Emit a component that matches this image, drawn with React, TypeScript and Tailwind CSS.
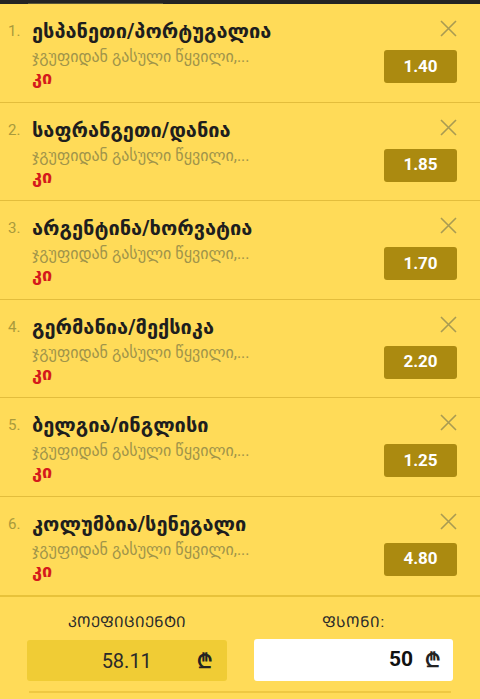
import React from "react";

const items = [
  { n: 1, title: "ესპანეთი/პორტუგალია", odd: "1.40" },
  { n: 2, title: "საფრანგეთი/დანია", odd: "1.85" },
  { n: 3, title: "არგენტინა/ხორვატია", odd: "1.70" },
  { n: 4, title: "გერმანია/მექსიკა", odd: "2.20" },
  { n: 5, title: "ბელგია/ინგლისი", odd: "1.25" },
  { n: 6, title: "კოლუმბია/სენეგალი", odd: "4.80" },
];

const font = { fontFamily: "Roboto, 'DejaVu Sans', sans-serif" };

function XIcon() {
  return (
    <svg width="17" height="17" viewBox="0 0 17 17" fill="none">
      <path d="M1 1L16 16M16 1L1 16" stroke="#a99b52" strokeWidth="1.6" />
    </svg>
  );
}

export default function App() {
  return (
    <div className="w-[480px] h-[699px] overflow-hidden bg-[#ffdb58] flex flex-col" style={font}>
      <div className="h-[4px] bg-[#242424] flex items-end shrink-0">
        <div className="ml-[28px] w-[135px] h-[1px] bg-[#5a5638]" />
      </div>
      {items.map((it, i) => (
        <div
          key={it.n}
          className={`h-[98.5px] shrink-0 flex ${i < 5 ? "border-b border-[#e3bd3c]" : ""}`}
        >
          <div className="w-[32px] pl-[8px] pt-[15px] text-[15px] leading-[24px] text-[#a99a3c]">{it.n}.</div>
          <div className="flex-1 flex flex-col pt-[14px] whitespace-nowrap">
            <div className="text-[20px] font-bold leading-[26px] text-[#1e1e1e]">{it.title}</div>
            <div className="text-[16px] leading-[20px] mt-[3px] text-[#a0944a]">ჯგუფიდან გასული წყვილი,...</div>
            <div className="text-[18px] font-bold leading-[20px] mt-[1px] text-[#d41a1c]">კი</div>
          </div>
          <div className="w-[96px] flex flex-col items-end pr-[23px] pt-[16px]">
            <div className="h-[17px] w-[17px]">
              <XIcon />
            </div>
            <div className="mt-[13px] w-[73px] h-[33px] rounded-[3px] bg-[#ab8a10] text-white font-bold text-[17px] flex items-center justify-center" style={{ fontFamily: "Roboto, sans-serif" }}>
              {it.odd}
            </div>
          </div>
        </div>
      ))}
      <div className="border-t-2 border-[#e8c23a] flex-1 flex flex-col">
        <div className="flex gap-[27px] px-[27px] pt-[15px]">
          <div className="flex-1 flex flex-col items-center">
            <div className="text-[15px] leading-[20px] text-[#2a2a2a]">ᲙᲝᲔᲤᲘᲪᲘᲔᲜᲢᲘ</div>
            <div className="mt-[8px] w-full h-[41px] rounded-[3px] bg-[#f0cc35] relative flex items-center justify-center">
              <span className="text-[20px] text-[#2a2a2a]" style={{ fontFamily: "Roboto, sans-serif" }}>58.11</span>
              <span className="absolute right-[15px] text-[20px] font-bold text-[#222]">₾</span>
            </div>
          </div>
          <div className="flex-1 flex flex-col items-center">
            <div className="text-[15px] leading-[20px] text-[#2a2a2a]">ᲤᲡᲝᲜᲘ:</div>
            <div className="mt-[7px] w-full h-[42px] rounded-[3px] bg-white flex items-center justify-end pr-[13px] gap-[12px]">
              <span className="text-[21px] font-bold text-[#111]" style={{ fontFamily: "Roboto, sans-serif" }}>50</span>
              <span className="text-[20px] font-bold text-[#222]">₾</span>
            </div>
          </div>
        </div>
        <div className="mx-[29px] mt-[10px] h-[2px] bg-[#efc842]" />
      </div>
    </div>
  );
}
